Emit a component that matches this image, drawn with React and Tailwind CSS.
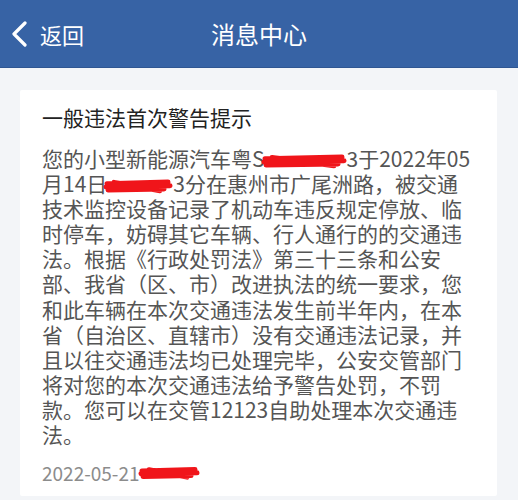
import React from "react";

const font = { fontFamily: '"Noto Sans CJK SC", "Noto Sans", sans-serif' };

function Redact({ w, h = 18 }) {
  const d = `M3 ${h * 0.38} L ${w - 2} ${h * 0.28} M2 ${h * 0.55} L ${w} ${h * 0.48} M4 ${h * 0.72} L ${w - 6} ${h * 0.66} M10 ${h * 0.3} L ${w - 10} ${h * 0.76}`;
  return (
    <span className="relative inline-block align-middle" style={{ width: w, height: h }}>
      <svg
        width={w + 6}
        height={h}
        viewBox={`0 0 ${w + 6} ${h}`}
        className="absolute left-[-3px] top-0 overflow-visible"
      >
        <path d={d} stroke="#f0151a" strokeWidth="5" fill="none" strokeLinecap="round" />
      </svg>
    </span>
  );
}

export default function App() {
  const lines = [
    "技术监控设备记录了机动车违反规定停放、临",
    "时停车，妨碍其它车辆、行人通行的的交通违",
    "法。根据《行政处罚法》第三十三条和公安",
    "部、我省（区、市）改进执法的统一要求，您",
    "和此车辆在本次交通违法发生前半年内，在本",
    "省（自治区、直辖市）没有交通违法记录，并",
    "且以往交通违法均已处理完毕，公安交管部门",
    "将对您的本次交通违法给予警告处罚，不罚",
    "款。您可以在交管12123自助处理本次交通违",
    "法。",
  ];
  return (
    <div className="w-[518px] h-[500px] overflow-hidden bg-[#f3f5f8]" style={font}>
      <div className="h-[68px] bg-[#3763a5] border-b border-[#2f5692] flex items-center relative">
        <div className="flex items-center pl-[11px] text-white">
          <svg width="17" height="26" viewBox="0 0 17 26" className="mt-[1px]">
            <path d="M14 2 L3 13 L14 24" stroke="white" strokeWidth="3.2" fill="none" strokeLinecap="round" strokeLinejoin="round" />
          </svg>
          <span className="ml-[12px] text-[22px] leading-none">返回</span>
        </div>
        <div className="absolute left-0 right-0 top-0 h-full flex items-center justify-center pointer-events-none">
          <span className="text-white text-[24px] leading-none">消息中心</span>
        </div>
      </div>
      <div className="pt-[22px] px-[20px] pr-[21px]">
        <div className="bg-white rounded-[2px] h-[406px] px-[22px] pt-[15px]">
          <div className="text-[21px] leading-[25px] text-[#222222] whitespace-nowrap">一般违法首次警告提示</div>
          <div className="mt-[16px] text-[21px] leading-[25.1px] text-[#555555] whitespace-nowrap">
            <div>
              您的小型新能源汽车粤S
              <Redact w={82} />
              3于2022年05
            </div>
            <div>
              月14日
              <Redact w={66} />
              3分在惠州市广尾洲路，被交通
            </div>
            {lines.map((l, i) => (
              <div key={i}>{l}</div>
            ))}
          </div>
          <div className="mt-[13px] text-[19px] leading-[25px] text-[#8c8c8c] whitespace-nowrap flex items-center">
            <span>2022-05-21</span>
            <span className="ml-[2px] flex items-center">
              <Redact w={58} h={16} />
            </span>
          </div>
        </div>
      </div>
    </div>
  );
}
